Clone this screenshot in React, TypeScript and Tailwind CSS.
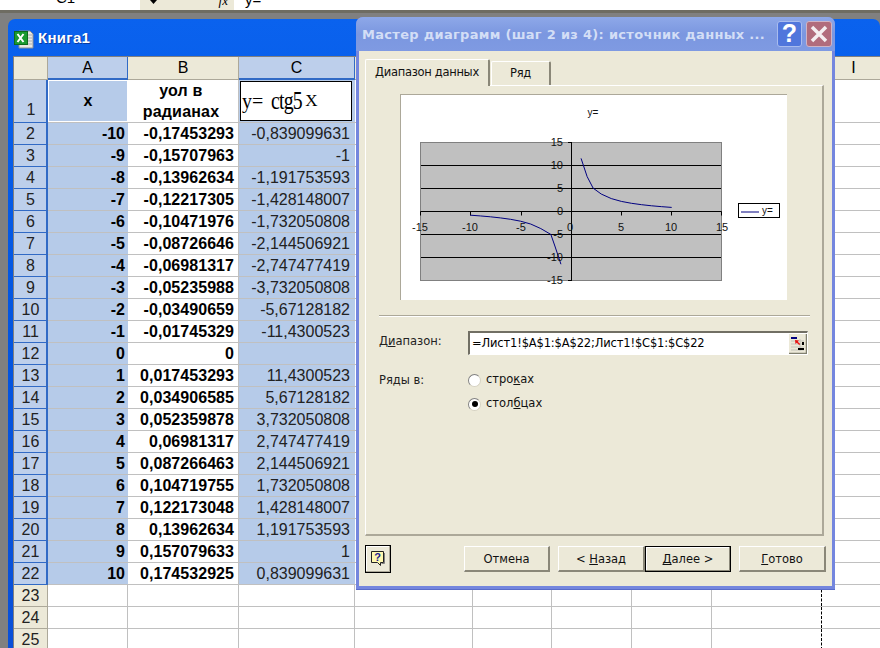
const rows: [number | string, string, string, string][] = [
  ["2", "-10", "-0,17453293", "-0,839099631"],
  ["3", "-9", "-0,15707963", "-1"],
  ["4", "-8", "-0,13962634", "-1,191753593"],
  ["5", "-7", "-0,12217305", "-1,428148007"],
  ["6", "-6", "-0,10471976", "-1,732050808"],
  ["7", "-5", "-0,08726646", "-2,144506921"],
  ["8", "-4", "-0,06981317", "-2,747477419"],
  ["9", "-3", "-0,05235988", "-3,732050808"],
  ["10", "-2", "-0,03490659", "-5,67128182"],
  ["11", "-1", "-0,01745329", "-11,4300523"],
  ["12", "0", "0", ""],
  ["13", "1", "0,017453293", "11,4300523"],
  ["14", "2", "0,034906585", "5,67128182"],
  ["15", "3", "0,052359878", "3,732050808"],
  ["16", "4", "0,06981317", "2,747477419"],
  ["17", "5", "0,087266463", "2,144506921"],
  ["18", "6", "0,104719755", "1,732050808"],
  ["19", "7", "0,122173048", "1,428148007"],
  ["20", "8", "0,13962634", "1,191753593"],
  ["21", "9", "0,157079633", "1"],
  ["22", "10", "0,174532925", "0,839099631"],
];

const sx = (v: number) => 571 + v * 10.07;
const sy = (v: number) => 211.3 + v * 4.63;
const pts = (a: [number, number][]) => a.map(([x, y]) => `${sx(x)},${sy(-y)}`).join(" ");

function EmptyCols() {
  return (
    <>
      <div className="w-[118px] border-r border-[#c0c0c0]" />
      <div className="w-[79px] border-r border-[#c0c0c0]" />
      <div className="w-[80px] border-r border-[#c0c0c0]" />
      <div className="w-[80px] border-r border-[#c0c0c0]" />
      <div className="w-[110px] border-r border-dashed border-black" />
      <div className="flex-1" />
    </>
  );
}

function ColHead({ label, w, on }: { label: string; w: string; on?: boolean }) {
  return (
    <div className={`${w} flex items-center justify-center border-r text-[16px] ${on ? "bg-[#bdcfeb] border-b-2 border-b-[#316ac5] border-r-[#316ac5]" : "bg-[#ece9d8] border-b border-b-[#aca899] border-r-[#aca899]"}`}>
      {label}
    </div>
  );
}

function XpButton({ children, wide }: { children: React.ReactNode; wide?: boolean }) {
  return (
    <div className={`h-[26px] ${wide ? "w-[86px]" : "w-[87px]"} flex items-center justify-center pt-[2px] bg-[#ece9d8] border-t border-l border-white border-r-2 border-b-2 border-r-[#8a8778] border-b-[#8a8778] text-[11.5px] text-[#111]`}>
      {children}
    </div>
  );
}

function Radio({ on }: { on?: boolean }) {
  return (
    <div className="w-[13px] h-[13px] rounded-full bg-white border border-t-[#808080] border-l-[#808080] border-r-[#d5d2c2] border-b-[#d5d2c2] flex items-center justify-center">
      {on && <div className="w-[6px] h-[6px] rounded-full bg-black" />}
    </div>
  );
}

export default function App() {
  return (
    <div className="relative w-[880px] h-[648px] overflow-hidden bg-[#808080] flex flex-col font-['Liberation_Sans',Arial,sans-serif] text-black">
      {/* formula bar */}
      <div className="h-[10px] bg-white flex overflow-hidden items-start shrink-0 text-[15px] leading-[10px]">
        <div className="w-[140px] pl-[56px] h-[10px] flex items-end"><span className="block leading-[16px] -translate-y-[4px] whitespace-nowrap">C1</span></div>
        <div className="w-[94px] h-[10px] bg-[#ece9d8] flex justify-between pl-[9px] pr-[6px]">
          <svg width="9" height="4" viewBox="0 0 9 4"><path d="M1 0h7L4.500 4z" fill="#000" /></svg>
          <span className="font-['Liberation_Serif',serif] italic text-[13px] leading-[8px] -translate-y-[3px]">fx</span>
        </div>
        <div className="pl-[11px] h-[10px] flex items-end"><span className="block leading-[14px] -translate-y-[3px]">y=</span></div>
      </div>
      <div className="h-[3px] bg-[#6e6c62] shrink-0" />
      <div className="h-[6px] shrink-0" />
      {/* workbook window */}
      <div className="ml-[8px] flex-1 min-h-0 rounded-t-[7px] bg-gradient-to-b from-[#0a62ee] via-[#0355e0] to-[#0a50d8] flex flex-col pl-[5px]">
        <div className="h-[37px] shrink-0 flex items-center ml-[1px] gap-[4px] pt-[2px]">
          <svg width="20" height="20" viewBox="0 0 20 20" className="shrink-0">
            <path d="M5 2h11l3 3v14H5z" fill="#e8e8e0" stroke="#8a8f98" strokeWidth="1" />
            <path d="M12 6h6M12 9h6M12 12h6M12 15h6" stroke="#a8adb4" />
            <rect x="0.500" y="2.500" width="13" height="13" fill="#1b9a30" stroke="#0d6b1d" />
            <path d="M3.500 5l6 8M9.500 5l-6 8" stroke="#fff" strokeWidth="2" />
          </svg>
          <span className="text-white font-bold text-[15px] tracking-[0.3px] [text-shadow:1px_1px_0_#0a3aa0]">Книга1</span>
        </div>
        <div className="flex-1 min-h-0 bg-white overflow-hidden flex flex-col border-t border-l border-[#808080]">
          <div className="h-[23px] shrink-0 flex bg-[#ece9d8]">
            <div className="w-[34px] bg-[#ece9d8] border-r border-b border-[#aca899]" />
            <ColHead label="A" w="w-[80px]" on />
            <ColHead label="B" w="w-[111px]" />
            <ColHead label="C" w="w-[116px]" on />
            <ColHead label="" w="w-[118px]" />
            <ColHead label="" w="w-[79px]" />
            <ColHead label="" w="w-[80px]" />
            <ColHead label="" w="w-[80px]" />
            <ColHead label="" w="w-[110px]" />
            <div className="flex-1 flex items-center justify-center border-b border-[#aca899] text-[16px] pl-[5px]">I</div>
          </div>
          {/* row 1 */}
          <div className="h-[43px] shrink-0 flex border-b border-[#c0c0c0]">
            <div className="w-[34px] bg-[#bdcfeb] border-r-2 border-r-[#316ac5] border-b border-b-[#316ac5] -mb-px flex items-end justify-center text-[16px] text-[#222] pl-[2px]">1</div>
            <div className="w-[80px] bg-[#b6cbe9] border border-white flex items-center justify-center font-bold text-[16px]">x</div>
            <div className="w-[111px] border-r border-[#c0c0c0] flex items-end justify-center text-center font-bold text-[16px] leading-[21px] tracking-[0.2px] pr-[4px]">уол в<br />радианах</div>
            <div className="w-[116px] bg-[#b6cbe9] pl-[1px] pr-[3px] py-px">
              <div className="h-full bg-white border border-black flex items-center pl-[1px] font-['Liberation_Serif',serif] whitespace-nowrap overflow-hidden">
                <span className="text-[20px]">y=</span>
                <span className="inline-block w-[33px] ml-[8px] text-[26px] tracking-[-1px] leading-none origin-left scale-x-[0.76]">ctg5</span>
                <span className="text-[17px] ml-[1px]">X</span>
              </div>
            </div>
            <EmptyCols />
          </div>
          {rows.map(([n, a, b, c]) => (
            <div key={n} className="h-[22px] shrink-0 flex border-b border-[#c0c0c0] text-[16px] leading-[21px]">
              <div className="w-[34px] bg-[#bdcfeb] border-r-2 border-r-[#316ac5] border-b border-b-[#316ac5] -mb-px text-center text-[#222] pl-[1px]">{n}</div>
              <div className="w-[80px] bg-[#b6cbe9] text-right font-bold pr-[3px]">{a}</div>
              <div className="w-[111px] border-r border-[#c0c0c0] text-right font-bold pr-[4px] tracking-[0.05px]">{b}</div>
              <div className="w-[116px] bg-[#b6cbe9] text-right pr-[5px] text-[#222]">{c}</div>
              <EmptyCols />
            </div>
          ))}
          {["23", "24", "25"].map((n) => (
            <div key={n} className="h-[22px] shrink-0 flex border-b border-[#c0c0c0] text-[16px] leading-[21px]">
              <div className="w-[34px] bg-[#ece9d8] border-r border-r-[#aca899] border-b border-b-[#aca899] -mb-px text-center text-[#222]">{n}</div>
              <div className="w-[80px] border-r border-[#c0c0c0]" />
              <div className="w-[111px] border-r border-[#c0c0c0]" />
              <div className="w-[116px] border-r border-[#c0c0c0]" />
              <EmptyCols />
            </div>
          ))}
        </div>
      </div>

      {/* dialog */}
      <div className="absolute left-[356px] top-[17px] w-[479px] h-[572px] rounded-t-[7px] bg-[#7486de] flex flex-col pb-[3px] font-['DejaVu_Sans',sans-serif] text-[#111] shadow-[0_1px_0_#5a6cc8]">
        <div className="h-[34px] shrink-0 rounded-t-[7px] bg-gradient-to-b from-[#8ea8e8] via-[#7b97e0] to-[#7f9ae2] flex items-center pl-[6px] pr-[3px]">
          <span className="flex-1 text-[#d3def6] font-bold text-[13px] tracking-[0.3px] whitespace-nowrap overflow-hidden pt-px">Мастер диаграмм (шаг 2 из 4): источник данных ...</span>
          <div className="w-[25px] h-[26px] rounded-[3px] bg-[#5076dc] border border-[#a9bcee] flex items-center justify-center text-white font-bold text-[25px] font-['Liberation_Sans',sans-serif] mr-[4px]">?</div>
          <div className="w-[26px] h-[26px] rounded-[3px] bg-[#b16c7c] border border-[#d0b4c4] flex items-center justify-center">
            <svg width="20" height="20" viewBox="0 0 20 20"><path d="M3 3l14 14M17 3L3 17" stroke="#f4eef0" strokeWidth="3.500" /></svg>
          </div>
        </div>
        <div className="flex-1 min-h-0 mx-[3px] bg-[#ece9d8] px-[6px] pt-[8px] flex flex-col">
          <div className="h-[26px] shrink-0 flex items-end relative z-10 text-[11.5px]">
            <div className="w-[125px] h-[27px] -mb-px bg-[#ece9d8] border-t border-l border-white border-r-2 border-r-[#8a8778] rounded-t-[2px] flex items-center justify-center tracking-[-0.3px]">Диапазон данных</div>
            <div className="w-[60px] h-[24px] ml-px bg-[#ece9d8] border-t border-l border-white border-r-2 border-r-[#8a8778] rounded-t-[2px] flex items-center justify-center tracking-[-0.3px]">Ряд</div>
          </div>
          <div className="h-[451px] w-[459px] shrink-0 border-t border-l border-white border-r-2 border-b-2 border-r-[#aca899] border-b-[#aca899] flex flex-col pl-[34px] pt-[8px]">
            <div className="w-[387px] h-[206px] shrink-0 bg-white border-t border-l border-[#aca899]">
              <svg width="386" height="205" viewBox="401 95 386 205" fontFamily="'Liberation Sans', Arial, sans-serif" fontSize="11" fill="#111">
                <rect x="420.500" y="142.500" width="301" height="138" fill="#c0c0c0" stroke="#808080" />
                <path d="M421 165.500h300M421 188.500h300M421 234.500h300M421 257.500h300" stroke="#000" />
                <path d="M420.500 211.500h301M571.500 142v139" stroke="#000" fill="none" />
                <path d="M420.500 211.500v4M470.500 211.500v4M521.500 211.500v4M621.500 211.500v4M671.500 211.500v4M721.500 211.500v4M568 142.500h3M568 165.500h3M568 188.500h3M568 234.500h3M568 257.500h3M568 280.500h3" stroke="#000" />
                <polyline fill="none" stroke="#000080" strokeWidth="1" points={pts([[-10,-0.839],[-9,-1],[-8,-1.19],[-7,-1.43],[-6,-1.73],[-5,-2.14],[-4,-2.75],[-3,-3.73],[-2,-5.0],[-1.6,-7.5],[-1,-11.43]])} />
                <polyline fill="none" stroke="#000080" strokeWidth="1" points={pts([[1,11.43],[1.6,7.5],[2.2,5.0],[3,3.73],[4,2.75],[5,2.14],[6,1.73],[7,1.43],[8,1.19],[9,1],[10,0.839]])} />
                {[["15",146],["10",169],["5",192],["0",215],["-5",238],["-10",261],["-15",284]].map(([t,y]) => (
                  <text key={t as string} x="563" y={y as number} textAnchor="end">{t}</text>
                ))}
                {[["-15",420],["-10",470],["-5",521],["0",570],["5",621],["10",671],["15",722]].map(([t,x]) => (
                  <text key={t as string} x={x as number} y="231" textAnchor="middle">{t}</text>
                ))}
                <text x="593" y="116" textAnchor="middle" fontSize="10">y=</text>
                <rect x="738.500" y="203.500" width="41" height="14" fill="#fff" stroke="#000" />
                <path d="M741 212h18" stroke="#000080" />
                <text x="762" y="214" fontSize="10">y=</text>
              </svg>
            </div>
            <div className="w-[431px] h-[2px] shrink-0 mt-[15px] -ml-[21px] border-t border-[#aca899] border-b border-b-white" />
            <div className="flex mt-[14px] -ml-[21px] h-[24px] shrink-0 text-[11.5px]">
              <span className="w-[89px] pt-[2px] text-[#222]">Д<u>и</u>апазон:</span>
              <div className="w-[340px] h-[24px] bg-white border-t-2 border-l-2 border-[#716f64] border-b border-r border-b-white border-r-white flex items-center justify-between pl-[2px] pr-0">
                <span className="text-black whitespace-nowrap tracking-[-0.15px]">=Лист1!$A$1:$A$22;Лист1!$C$1:$C$22</span>
                <svg width="18" height="20" viewBox="0 0 18 20" className="shrink-0">
                  <rect x="0" y="0" width="18" height="20" fill="#ece9d8" />
                  <path d="M17.500 0v19.500H0" stroke="#808070" fill="none" strokeWidth="1.500" />
                  <rect x="2" y="3" width="6" height="2" fill="#000080" />
                  <path d="M2 7h13M2 10h13M2 13h13M2 16h13M11 5v12" stroke="#c4c4bc" />
                  <rect x="9" y="14" width="6" height="2" fill="#000" />
                  <rect x="13" y="8" width="2" height="3" fill="#000" />
                  <path d="M6 6l4 .500-1.200 1.200 2.400 2.400-1 1-2.400-2.400-1.300 1.300z" fill="#e81010" />
                </svg>
              </div>
            </div>
            <div className="flex mt-[12px] -ml-[21px] text-[11.5px] shrink-0">
              <span className="w-[89px] pt-[5px] text-[#222]">Ряды в:</span>
              <div className="flex flex-col gap-[10px] pt-[6px]">
                <div className="flex items-center gap-[5px] h-[14px]"><Radio /><span>стро<u>к</u>ах</span></div>
                <div className="flex items-center gap-[5px] h-[14px]"><Radio on /><span>стол<u>б</u>цах</span></div>
              </div>
            </div>
          </div>
          <div className="flex items-start mt-[9px] shrink-0 h-[28px]">
            <div className="w-[26px] h-[28px] border border-black bg-[#ece9d8] flex items-center justify-center shadow-[inset_-1px_-1px_0_#aca899,inset_1px_1px_0_#fff]">
              <svg width="16" height="18" viewBox="0 0 16 18">
                <path d="M1.500 1.500h12v11h-3v3l-3-3h-6z" fill="#fff8b0" stroke="#222" />
                <path d="M14.500 3v10.500h-3" stroke="#808080" fill="none" />
                <text x="7.500" y="11" textAnchor="middle" fontSize="11" fontWeight="700" fill="#1a1a90" fontFamily="'Liberation Sans', sans-serif">?</text>
              </svg>
            </div>
            <div className="ml-[73px] mt-[1px]"><XpButton wide>Отмена</XpButton></div>
            <div className="ml-[8px] mt-[1px]"><XpButton><span>&lt; <u>Н</u>азад</span></XpButton></div>
            <div className="mt-[1px] h-[26px] w-[86px] flex items-center justify-center pt-[2px] bg-[#ece9d8] border border-black shadow-[inset_-1px_-1px_0_#8a8778,inset_1px_1px_0_#fff] text-[11.5px]"><span><u>Д</u>алее &gt;</span></div>
            <div className="ml-[8px] mt-[1px]"><XpButton><span><u>Г</u>отово</span></XpButton></div>
          </div>
        </div>
      </div>
    </div>
  );
}
